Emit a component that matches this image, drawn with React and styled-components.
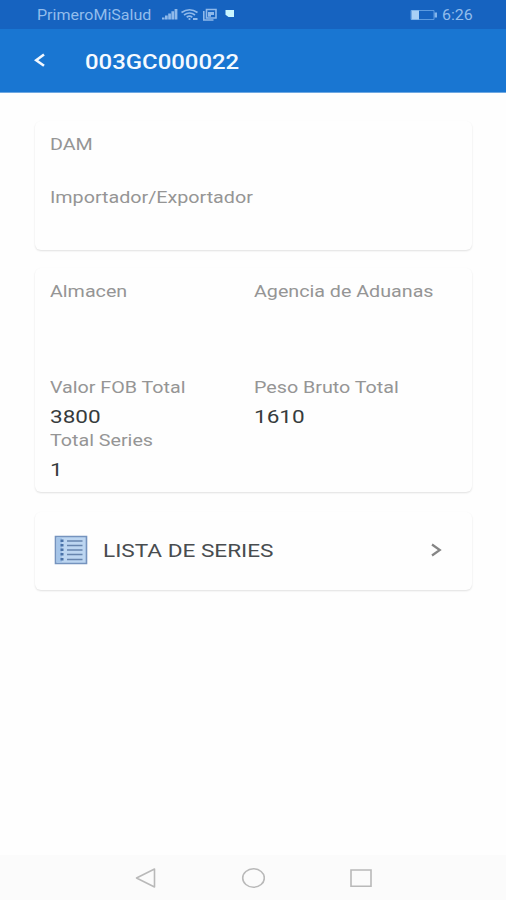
import styled, { createGlobalStyle } from 'styled-components';

const GlobalStyle = createGlobalStyle`
	* {
		box-sizing: border-box;
	}
	body {
		margin: 0;
		background: #fefefe;
		font-family: Roboto, sans-serif;
	}
`;

const Screen = styled.div`
	display: flex;
	flex-direction: column;
	width: 506px;
	height: 900px;
	overflow: hidden;
	background: #fefefe;
`;

const StatusBar = styled.header`
	display: flex;
	align-items: center;
	justify-content: space-between;
	height: 29px;
	padding: 1px 33px 0 37px;
	background: #1663c0;
`;

const StatusGroup = styled.div`
	display: flex;
	align-items: center;
	height: 28px;
`;

// wide lettering: the box keeps its own width, the glyphs are stretched from the left
const Stretched = styled.span`
	display: block;
	white-space: nowrap;
	transform: scaleX(${({ $stretch }) => $stretch || 1.2});
	transform-origin: left center;
`;

const StatusText = styled(Stretched)`
	width: ${({ $width }) => $width}px;
	font-size: 14px;
	line-height: 28px;
	color: #92bdec;
`;

const StatusIcons = styled.svg`
	display: block;
	width: 76px;
	height: 16px;
	margin-bottom: 2px;
`;

const BatteryIcon = styled.svg`
	display: block;
	width: 29px;
	height: 12px;
	margin-right: 3px;
	margin-bottom: 1px;
`;

const Toolbar = styled.div`
	display: flex;
	align-items: center;
	height: 64px;
	padding-left: 34px;
	background: #1976d2;
	border-bottom: 1px solid #6ea8e2;
`;

const BackIcon = styled.svg`
	display: block;
	width: 12px;
	height: 16px;
	margin-right: 39px;
	margin-bottom: 2px;
`;

const Title = styled(Stretched)`
	padding-top: 2px;
	font-size: 20px;
	font-weight: 500;
	line-height: 24px;
	color: #f5faff;
`;

const Content = styled.main`
	display: flex;
	flex: 1;
	flex-direction: column;
	padding: 28px 34px 0 35px;
`;

const Card = styled.section`
	height: ${({ $height }) => $height}px;
	margin-bottom: ${({ $gap }) => $gap || 0}px;
	padding: 15px 15px 0;
	background: #fefefe;
	border-radius: 6px;
	box-shadow: 0 1px 2px rgba(0, 0, 0, 0.12);
`;

const FieldGrid = styled.div`
	display: grid;
	grid-template-columns: 204px 1fr;
	grid-template-rows: ${({ $rows }) => $rows};
`;

const Label = styled(Stretched)`
	font-size: 16px;
	line-height: 18px;
	color: #959595;
`;

const Value = styled(Stretched)`
	margin-top: 9px;
	font-size: 18px;
	line-height: 22px;
	color: #363b3c;
`;

const SeriesCard = styled(Card)`
	display: flex;
	align-items: center;
	padding: 0 30px 2px 19px;
`;

const SeriesText = styled(Stretched)`
	width: 327px;
	padding-top: 2px;
	font-size: 18px;
	line-height: 24px;
	color: #484c4f;
`;

const ListIcon = styled.svg`
	display: block;
	width: 34px;
	height: 30px;
	margin-right: 15px;
`;

const ChevronIcon = styled.svg`
	display: block;
	width: 12px;
	height: 14px;
`;

const NavBar = styled.nav`
	display: flex;
	align-items: center;
	justify-content: space-between;
	height: 45px;
	padding: 0 133px 0 133px;
	background: #fbfbfb;
`;

const NavIcon = styled.svg`
	display: block;
	width: 24px;
	height: 22px;
	fill: none;
	stroke: #b9b9b9;
	stroke-width: 1.6;
`;

const Field = ({ label, value }) => (
	<div>
		<Label $stretch={1.23}>{label}</Label>
		{value && <Value $stretch={1.25}>{value}</Value>}
	</div>
);

const App = () => {
	return (
		<>
			<GlobalStyle />
			<Screen>
				<StatusBar>
					<StatusGroup>
						<StatusText $width={124} $stretch={1.145}>
							PrimeroMiSalud
						</StatusText>
						<StatusIcons viewBox="0 0 76 16" fill="#8fb9ea">
							<path d="M1 13.5v-2h2.600v2zM4 13.5v-4h2.700v4zM7.200 13.5v-6h2.700v6zM10.400 13.5V5.200h2.700v8.300zM13.600 13.5V3h2.800v10.500z" />
							<g fill="none" stroke="#8fb9ea" strokeWidth="1.7">
								<path d="M20.500 6.500q8-5.500 16 0" />
								<path d="M23 9q5.500-4 11 0" />
								<path d="M25.700 11.200q2.800-2 5.600 0" />
							</g>
							<circle cx="28.500" cy="13" r="1.100" />
							<path d="M32 12h4.500v2H32z" />
							<g fill="none" stroke="#8fb9ea" strokeWidth="1.6">
								<path d="M45.500 3.500h9.500v8.500h-9.500z" />
								<path d="M42.800 5v9H52.500" />
							</g>
							<path d="M47 6h6v3h-3v1.800h-3z" />
							<path d="M64.500 4h8.500v7h-5.500L64.500 8.800z" fill="#c9f6ff" />
						</StatusIcons>
					</StatusGroup>
					<StatusGroup>
						<BatteryIcon viewBox="0 0 29 12">
							<path d="M1 1.500h23v9H1z" fill="none" stroke="#5c9be0" />
							<path d="M1.500 1.500h7.500v9H1.500z" fill="#a9d0f6" />
							<path d="M24.500 3.500h2.500v5h-2.500z" fill="#83b5eb" />
						</BatteryIcon>
						<StatusText $width={31} $stretch={1.14}>
							6:26
						</StatusText>
					</StatusGroup>
				</StatusBar>

				<Toolbar>
					<BackIcon viewBox="0 0 12 16" fill="none" stroke="#f2f8ff" strokeWidth="2.600">
						<path d="M10 2.500L2.200 8.200l7.800 5.600" />
					</BackIcon>
					<Title $stretch={1.195}>003GC000022</Title>
				</Toolbar>

				<Content>
					<Card $height={129} $gap={18}>
						<FieldGrid $rows="53px 53px">
							<Field label="DAM" />
							<span />
							<Field label="Importador/Exportador" />
						</FieldGrid>
					</Card>

					<Card $height={224} $gap={20}>
						<FieldGrid $rows="96px 53px 53px">
							<Field label="Almacen" />
							<Field label="Agencia de Aduanas" />
							<Field label="Valor FOB Total" value="3800" />
							<Field label="Peso Bruto Total" value="1610" />
							<Field label="Total Series" value="1" />
						</FieldGrid>
					</Card>

					<SeriesCard $height={78}>
						<ListIcon viewBox="0 0 34 30">
							<path d="M1.500 1.500h31v27h-31z" fill="#bdd6f1" stroke="#7593be" strokeWidth="1.600" />
							<path d="M3 2.500h5v25H3z" fill="#a5c5e9" />
							<path
								d="M13 6h15.500M13 10.500h15.500M13 15h15.500M13 19.500h15.500M13 24.500h15.500"
								stroke="#6785ae"
								strokeWidth="1.500"
							/>
							<path
								d="M6.500 5.800h3M6.500 10.300h3M6.500 14.800h3M6.500 19.300h3M6.500 24.300h3"
								stroke="#4a72a8"
								strokeWidth="2.600"
							/>
						</ListIcon>
						<SeriesText $stretch={1.255}>LISTA DE SERIES</SeriesText>
						<ChevronIcon viewBox="0 0 12 14" fill="none" stroke="#858585" strokeWidth="2.200">
							<path d="M2 1.500L9.800 7L2 12.500" />
						</ChevronIcon>
					</SeriesCard>
				</Content>

				<NavBar>
					<NavIcon viewBox="0 0 24 22">
						<path d="M21.500 2L3.500 11l18 9z" strokeLinejoin="round" />
					</NavIcon>
					<NavIcon viewBox="0 0 24 22">
						<ellipse cx="12.500" cy="11" rx="10.800" ry="9.200" />
					</NavIcon>
					<NavIcon viewBox="0 0 24 22">
						<path d="M2 3h20v16.200H2z" />
					</NavIcon>
				</NavBar>
			</Screen>
		</>
	);
};

export default App;
